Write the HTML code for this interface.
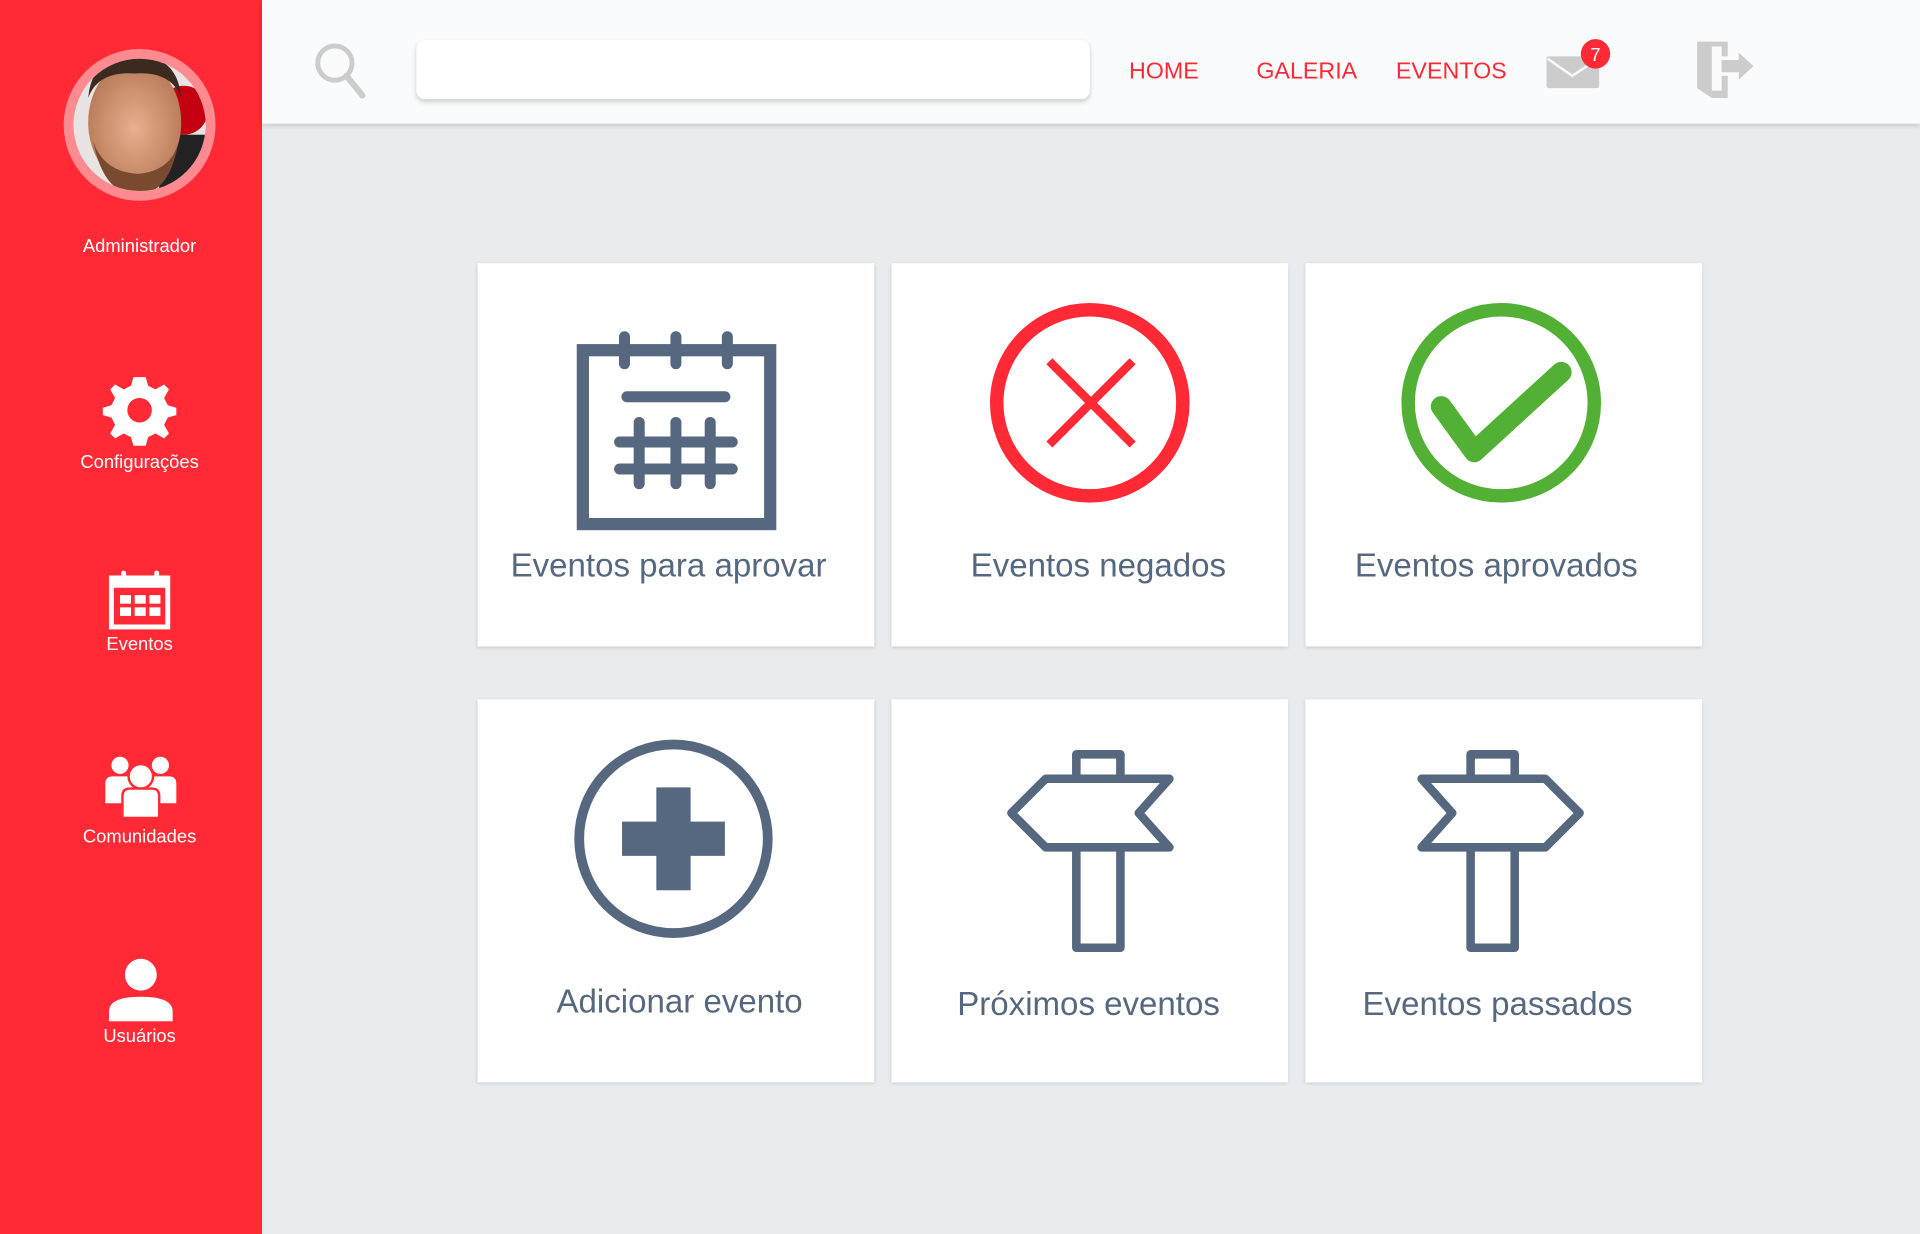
<!DOCTYPE html>
<html><head><meta charset="utf-8"><style>
html,body{margin:0;padding:0;width:1920px;height:1234px;overflow:hidden;background:#e9ecef;font-family:"Liberation Sans",sans-serif}
#w{position:absolute;left:0;top:0;width:1568px;height:1008px;transform:scale(1.22449);transform-origin:0 0}
.a{position:absolute}
#side{left:0;top:0;width:214px;height:1008px;background:#ff2a35}
.sl{position:absolute;left:14px;width:200px;text-align:center;color:#fff;font-size:15px}
#head{left:214px;top:0;width:1354px;height:101px;background:#fafbfc;box-shadow:0 2px 4px rgba(0,0,0,.15)}
.nav{position:absolute;top:48px;color:#ff2a35;font-size:19px}
.card{position:absolute;width:324px;height:313px;background:#fff;box-shadow:0 1px 3px rgba(0,0,0,.18)}
.card svg{position:absolute;left:0;top:0}
</style></head><body><div id="w">
<div id="side" class="a">
<svg class="a" style="left:0;top:0" width="214" height="900">
<defs><clipPath id="c"><circle cx="114" cy="102" r="54"/></clipPath>
<radialGradient id="sk" cx="50%" cy="55%" r="55%"><stop offset="0" stop-color="#e7b08e"/><stop offset="1" stop-color="#b87a58"/></radialGradient></defs>
<circle cx="114" cy="102" r="62" fill="#ff8a8f"/>
<g clip-path="url(#c)"><rect x="50" y="40" width="130" height="130" fill="#e8e4e4"/>
<circle cx="150" cy="90" r="20" fill="#c40010"/><rect x="130" y="110" width="50" height="60" fill="#222"/>
<ellipse cx="110" cy="100" rx="38" ry="50" fill="url(#sk)"/>
<path d="M72 80 Q75 45 110 45 Q145 45 148 80 Q140 58 110 60 Q80 58 72 80Z" fill="#3a2a20"/>
<path d="M76 115 Q85 160 112 158 Q138 160 146 115 Q140 140 112 142 Q84 140 76 115Z" fill="#7a4a30"/></g>
<path d="M114 308 l5 0 2 7 6 3 7-4 4 4-4 7 3 6 7 2 0 6-7 2-3 6 4 7-4 4-7-4-6 3-2 7-5 0-5 0-2-7-6-3-7 4-4-4 4-7-3-6-7-2 0-6 7-2 3-6-4-7 4-4 7 4 6-3 2-7z" fill="#fff"/>
<circle cx="114" cy="335" r="10" fill="#ff2a35"/>
<rect x="89" y="470" width="50" height="44" fill="#fff"/><rect x="93" y="480" width="42" height="30" fill="#ff2a35"/>
<rect x="99" y="466" width="4" height="10" rx="2" fill="#fff"/><rect x="126" y="466" width="4" height="10" rx="2" fill="#fff"/>
<g fill="#fff"><rect x="98" y="486" width="9" height="7"/><rect x="110" y="486" width="9" height="7"/><rect x="122" y="486" width="9" height="7"/><rect x="98" y="496" width="9" height="7"/><rect x="110" y="496" width="9" height="7"/><rect x="122" y="496" width="9" height="7"/></g>
<g fill="#fff"><circle cx="98" cy="625" r="7"/><circle cx="131" cy="625" r="7"/><path d="M86 656 v-16 q0-6 6-6 h14 q6 0 6 6 v16z"/><path d="M118 656 v-16 q0-6 6-6 h14 q6 0 6 6 v16z"/>
<circle cx="115" cy="634" r="10" stroke="#ff2a35" stroke-width="2"/><path d="M100 668 v-18 q0-6 6-6 h18 q6 0 6 6 v18z" stroke="#ff2a35" stroke-width="2"/>
<circle cx="115" cy="796" r="13"/><path d="M89 834 v-8 q0-12 26-12 q26 0 26 12 v8z"/></g>
</svg>
<div class="sl" style="top:193px">Administrador</div>
<div class="sl" style="top:369px">Configurações</div>
<div class="sl" style="top:518px">Eventos</div>
<div class="sl" style="top:675px">Comunidades</div>
<div class="sl" style="top:838px">Usuários</div>
</div>
<div id="head" class="a">
<svg class="a" style="left:-214px;top:0" width="1568" height="101">
<circle cx="273.5" cy="51.5" r="14" fill="none" stroke="#ccc" stroke-width="4"/><path d="M283 62 L296 78" stroke="#ccc" stroke-width="5" stroke-linecap="round"/>
<rect x="1263" y="46" width="43" height="26" rx="2" fill="#ccc"/><path d="M1264 48 L1284 62 L1305 48" fill="none" stroke="#fafbfc" stroke-width="2"/>
<circle cx="1303" cy="44" r="12" fill="#ff2a35"/><text x="1303" y="50" fill="#fff" font-size="15" text-anchor="middle" font-family="Liberation Sans">7</text>
<path d="M1386 34 L1411 34 L1411 46 L1406 46 L1406 38 L1398 38 L1398 80 L1386 72Z" fill="#ccc"/><path d="M1406 62 L1406 74 L1398 74 L1398 80 L1411 80 L1411 62Z" fill="#ccc"/>
<path d="M1406 49 L1420 49 L1420 43 L1432 54 L1420 65 L1420 59 L1406 59Z" fill="#ccc"/>
</svg>
<div class="a" style="left:126px;top:33px;width:550px;height:48px;background:#fff;border-radius:7px;box-shadow:0 2px 4px rgba(0,0,0,.18)"></div>
<div class="nav" style="left:708px">HOME</div>
<div class="nav" style="left:812px">GALERIA</div>
<div class="nav" style="left:926px">EVENTOS</div>
</div>

<div class="card" style="left:390px;top:215px"><svg width="324" height="313">
<g fill="none" stroke="#566880" stroke-width="9" stroke-linecap="round">
<rect x="86" y="71" width="153" height="142" stroke-width="10" stroke-linecap="butt"/>
<path d="M120 60v22M162 60v22M204 60v22M122 109h80M116 146h92M116 168h92M132 130v50M162 130v50M190 130v50"/></g>
<text x="156" y="256" fill="#566880" font-size="27" text-anchor="middle" font-family="Liberation Sans">Eventos para aprovar</text></svg></div>
<div class="card" style="left:728px;top:215px"><svg width="324" height="313">
<circle cx="162" cy="114" r="76" fill="none" stroke="#ff2a35" stroke-width="11"/>
<path d="M129 80L197 148M197 80L129 148" stroke="#ff2a35" stroke-width="7"/>
<text x="169" y="256" fill="#566880" font-size="27" text-anchor="middle" font-family="Liberation Sans">Eventos negados</text></svg></div>
<div class="card" style="left:1066px;top:215px"><svg width="324" height="313">
<circle cx="160" cy="114" r="76" fill="none" stroke="#52b035" stroke-width="11"/>
<path d="M111 117L138 154L209 89" fill="none" stroke="#52b035" stroke-width="17" stroke-linejoin="round" stroke-linecap="round"/>
<text x="156" y="256" fill="#566880" font-size="27" text-anchor="middle" font-family="Liberation Sans">Eventos aprovados</text></svg></div>

<div class="card" style="left:390px;top:571px"><svg width="324" height="313">
<circle cx="160" cy="114" r="77" fill="none" stroke="#566880" stroke-width="8"/>
<path d="M146 72h28v84h-28zM118 100h84v28h-84z" fill="#566880"/>
<text x="165" y="256" fill="#566880" font-size="27" text-anchor="middle" font-family="Liberation Sans">Adicionar evento</text></svg></div>
<div class="card" style="left:728px;top:571px"><svg width="324" height="313">
<g fill="none" stroke="#566880" stroke-width="7" stroke-linejoin="round">
<path d="M151 65V45h36v20M151 121v82h36v-82"/>
<path d="M227 65H126l-28 28 28 28h101l-25-28z"/></g>
<text x="161" y="258" fill="#566880" font-size="27" text-anchor="middle" font-family="Liberation Sans">Próximos eventos</text></svg></div>
<div class="card" style="left:1066px;top:571px"><svg width="324" height="313">
<g fill="none" stroke="#566880" stroke-width="7" stroke-linejoin="round">
<path d="M135 65V45h36v20M135 121v82h36v-82"/>
<path d="M95 65h101l28 28-28 28H95l25-28z"/></g>
<text x="157" y="258" fill="#566880" font-size="27" text-anchor="middle" font-family="Liberation Sans">Eventos passados</text></svg></div>
</div></body></html>
